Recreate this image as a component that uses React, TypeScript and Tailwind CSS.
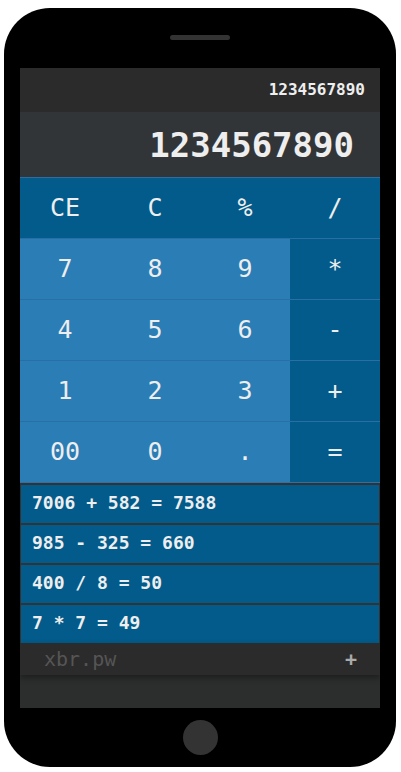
import React from 'react';

const mono = "font-['DejaVu_Sans_Mono',monospace]";

const keys = [
  ['CE', 'C', '%', '/'],
  ['7', '8', '9', '*'],
  ['4', '5', '6', '-'],
  ['1', '2', '3', '+'],
  ['00', '0', '.', '='],
];

const history = ['7006 + 582 = 7588', '985 - 325 = 660', '400 / 8 = 50', '7 * 7 = 49'];

const App: React.FC = () => {
  return (
    <div className={`w-[401px] h-[772px] bg-white ${mono}`}>
      <div className="ml-[4px] pt-[8px]">
        <div className="w-[392px] h-[759px] bg-black rounded-[46px] flex flex-col items-center">
          {/* speaker */}
          <div className="mt-[27px] w-[60px] h-[5px] rounded-full bg-[#333]" />

          {/* screen */}
          <div className="mt-[28px] w-[360px] h-[640px] flex flex-col bg-[#2c2d2d]">
            <div className="h-[44px] bg-[#2b2b2b] flex items-center justify-end pr-[15px]">
              <span className="text-[16px] font-bold text-[#eee] leading-none">1234567890</span>
            </div>
            <div className="h-[65px] bg-[#323537] flex items-center justify-end pr-[26px]">
              <span className="text-[34px] font-bold text-[#eee] leading-none">1234567890</span>
            </div>

            {/* keypad */}
            <div className="grid grid-cols-4 border-b border-[#2f6fa3]">
              {keys.map((row, r) =>
                row.map((k, c) => {
                  const op = r === 0 || c === 3;
                  return (
                    <div
                      key={`${r}-${c}`}
                      className={`h-[61px] border-t flex items-center justify-center text-[25px] text-[#eee] ${
                        op ? 'bg-[#025b8a] border-[#2b6ea3]' : 'bg-[#2b7db5] border-[#2a6ea6]'
                      }`}
                    >
                      {k}
                    </div>
                  );
                })
              )}
            </div>

            {/* history */}
            <div className="flex flex-col">
              {history.map((h) => (
                <div
                  key={h}
                  className="h-[40px] bg-[#025b8a] border-x border-t-2 border-[#333] flex items-center pl-[11px] pb-[3px] text-[18px] font-bold text-[#eee]"
                >
                  {h}
                </div>
              ))}
            </div>

            {/* footer */}
            <div className="relative z-10 h-[32px] bg-[#2b2b2b] flex items-center justify-between pl-[24px] pr-[23px] shadow-[0_3px_6px_rgba(0,0,0,0.35)]">
              <span className="text-[20px] text-[#555] leading-none">xbr.pw</span>
              <span className="text-[20px] font-bold text-[#aaa] leading-none">+</span>
            </div>
            <div className="flex-1 bg-[#2c2d2d]" />
          </div>

          {/* home button */}
          <div className="mt-[12px] w-[35px] h-[35px] rounded-full bg-[#333]" />
        </div>
      </div>
    </div>
  );
};

export default App;
